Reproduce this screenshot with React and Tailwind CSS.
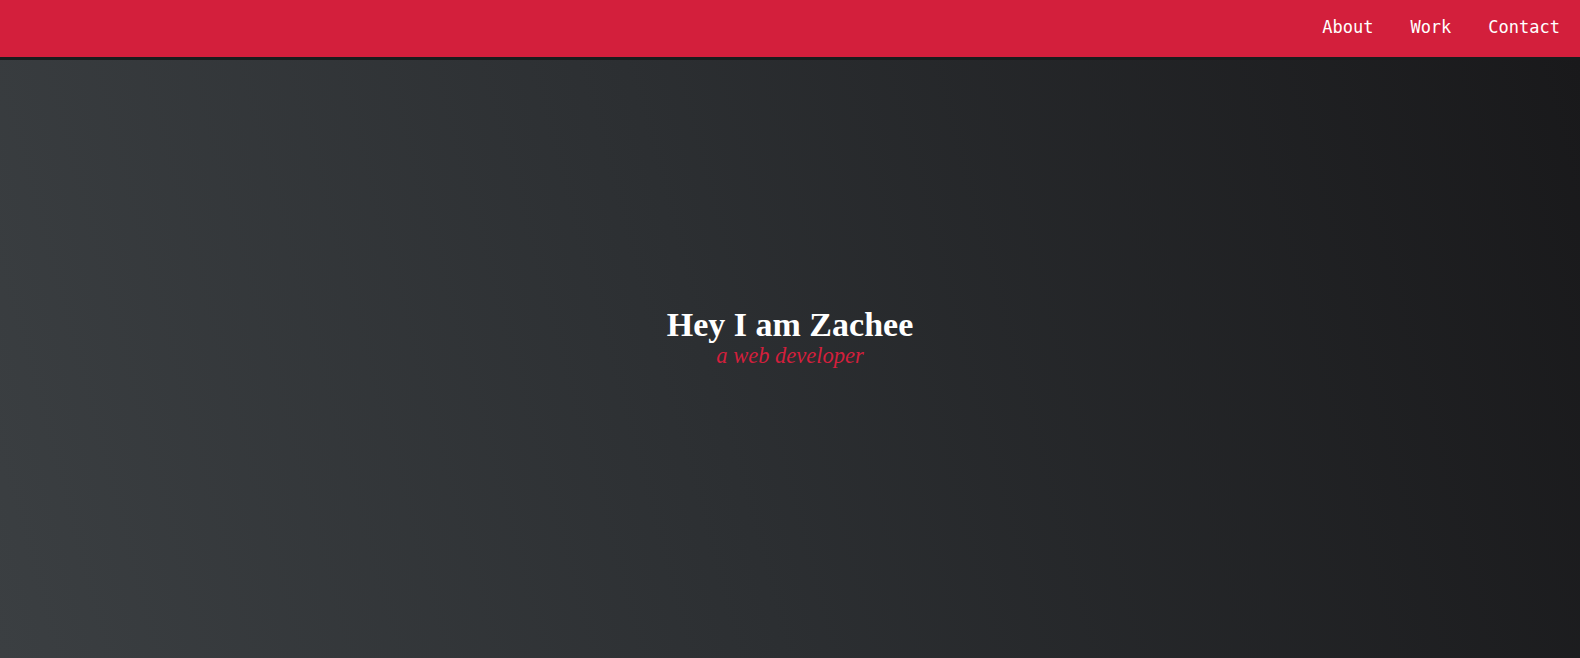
export default function App() {
  return (
    <div className="flex h-[658px] w-full flex-col overflow-hidden">
      <header className="relative z-10 flex h-[57px] shrink-0 items-center justify-end bg-[#d31f3c] pr-5 shadow-[0_3px_0_#1a1c1d]">
        <nav className="flex items-center gap-[37px] pb-[2px] font-['DejaVu_Sans_Mono',monospace] text-[17px] text-white">
          <a href="#about">About</a>
          <a href="#work">Work</a>
          <a href="#contact">Contact</a>
        </nav>
      </header>
      <main className="flex flex-1 flex-col items-center justify-center bg-[linear-gradient(75deg,#3b3f42,#2c2f32_45%,#19191b)] pb-[44px] pt-[3px] font-['Liberation_Serif',serif]">
        <h1 className="text-[34px] font-bold leading-[38px] text-white">Hey I am Zachee</h1>
        <p className="text-[22.5px] italic leading-[24px] text-[#d31f3c]">a web developer</p>
      </main>
    </div>
  );
}
